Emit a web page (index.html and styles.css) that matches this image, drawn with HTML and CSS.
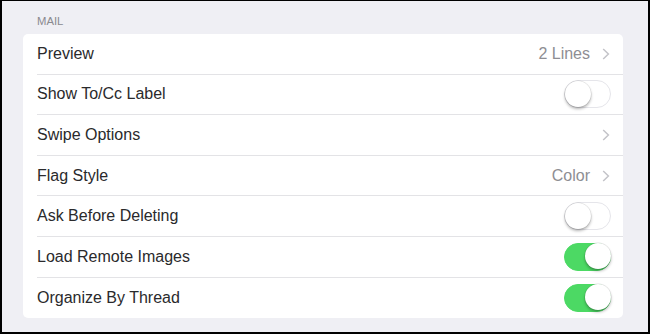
FILE: index.html
```html
<!DOCTYPE html>
<html lang="en">
<head>
    <meta charset="UTF-8">
    <title>Mail Settings</title>
    <link rel="stylesheet" href="styles.css">
</head>
<body>
    <div class="screen">
        <div class="section-title">MAIL</div>
        <div class="group">
            <div class="row">
                <span class="label">Preview</span>
                <span class="value">2 Lines</span>
                <svg class="chevron" viewBox="0 0 8 12"><path d="M1.2 1 L6.4 6 L1.2 11"/></svg>
            </div>
            <div class="row">
                <span class="label">Show To/Cc Label</span>
                <span class="switch"></span>
            </div>
            <div class="row">
                <span class="label">Swipe Options</span>
                <svg class="chevron" viewBox="0 0 8 12"><path d="M1.2 1 L6.4 6 L1.2 11"/></svg>
            </div>
            <div class="row">
                <span class="label">Flag Style</span>
                <span class="value">Color</span>
                <svg class="chevron" viewBox="0 0 8 12"><path d="M1.2 1 L6.4 6 L1.2 11"/></svg>
            </div>
            <div class="row">
                <span class="label">Ask Before Deleting</span>
                <span class="switch"></span>
            </div>
            <div class="row">
                <span class="label">Load Remote Images</span>
                <span class="switch on"></span>
            </div>
            <div class="row">
                <span class="label">Organize By Thread</span>
                <span class="switch on"></span>
            </div>
        </div>
    </div>
</body>
</html>
```

FILE: styles.css
```css
html, body {
    margin: 0;
    height: 100%;
}
body {
    font-family: "Liberation Sans", Arial, sans-serif;
    background-color: #000;
}
.screen {
    box-sizing: border-box;
    margin: 1px 2px 0 2px;
    height: 331px;
    background-color: #efeff4;
    padding: 13px 25px 0 21px;
}
.section-title {
    font-size: 11.3px;
    color: #8a8a8f;
    padding-left: 14px;
    height: 20px;
    line-height: 14px;
}
.group {
    background-color: #fff;
    border-radius: 5px;
    overflow: hidden;
}
.row {
    display: flex;
    align-items: center;
    height: 40.6px;
    box-sizing: border-box;
    margin-left: 14px;
    padding-right: 13px;
    border-bottom: 1px solid #e3e3e6;
}
.row:last-child {
    border-bottom: none;
}
.label {
    flex: 1;
    font-size: 16px;
    color: #2a2a2c;
}
.value {
    font-size: 16px;
    color: #8e8e93;
    margin-right: 12px;
}
.chevron {
    width: 8px;
    height: 12px;
    fill: none;
    stroke: #c4c4c9;
    stroke-width: 1.5;
}
.switch {
    position: relative;
    width: 47px;
    height: 28px;
    box-sizing: border-box;
    border-radius: 14px;
    border: 1.5px solid #e5e5ea;
    background-color: #fff;
    margin-right: -1px;
}
.switch::after {
    content: "";
    position: absolute;
    top: -0.5px;
    left: -0.5px;
    width: 26px;
    height: 26px;
    border-radius: 50%;
    background-color: #fff;
    box-shadow: 0 2px 3px rgba(0, 0, 0, 0.3), 0 0 0 0.5px rgba(0, 0, 0, 0.12);
}
.switch.on {
    background-color: #4cd964;
    border-color: #4cd964;
}
.switch.on::after {
    left: auto;
    right: -0.5px;
}
```
